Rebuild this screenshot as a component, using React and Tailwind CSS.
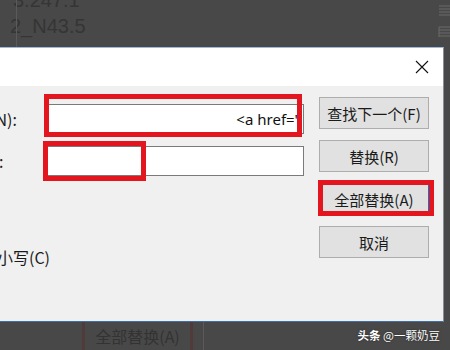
import React from "react";

function Btn({ children, focused }) {
  return (
    <div
      className={
        "h-[32px] w-[110px] flex items-center justify-center bg-[#e1e1e1] border text-[15px] text-[#1a1a1a] leading-none " +
        (focused ? "border-[#0078d7]" : "border-[#adadad]")
      }
    >
      {children}
    </div>
  );
}

export default function App() {
  return (
    <div className="w-[450px] h-[350px] overflow-hidden bg-[#484848] flex flex-col font-['Noto_Sans_CJK_SC','Noto_Sans',sans-serif]">
      {/* background editor strip */}
      <div className="h-[47px] flex shrink-0 overflow-hidden relative">
        <div className="ml-[10px] mt-[-13px] flex flex-col font-['Liberation_Sans',sans-serif] text-[20px] leading-[26px] text-[#353535]">
          <span className="ml-[3px]">3.247.1</span>
          <span>2_N43.5</span>
        </div>
        <div className="absolute left-[16px] top-0 w-px h-[47px] bg-[#5a5a5a]" />
        <div className="ml-auto mr-0 mt-[5px] flex flex-col gap-[10px]">
          <svg width="12" height="11" viewBox="0 0 12 11">
            <path d="M1 1H12M1 4H12M1 7H12M1 10H12" stroke="#6a6a6a" strokeWidth="1" />
          </svg>
          <svg width="12" height="12" viewBox="0 0 12 12">
            <path d="M1 1H12M1 4H12M1 7H12M1 10H12" stroke="#6a6a6a" strokeWidth="1" />
            <path d="M1 1V11" stroke="#6a6a6a" strokeWidth="1" />
          </svg>
        </div>
      </div>

      {/* dialog */}
      <div className="w-[444px] shrink-0 flex flex-col border-t border-t-[#9cb8dc] border-b border-b-[#3c6ea8] border-r border-r-[#8a8f96]">
        <div className="h-[38px] bg-white flex items-center justify-end pr-[14px]">
          <svg width="14" height="14" viewBox="0 0 14 14">
            <path d="M1 1L13 13M13 1L1 13" stroke="#111" strokeWidth="1.1" />
          </svg>
        </div>
        <div className="h-[235px] bg-[#f0f0f0] relative flex">
          {/* left column */}
          <div className="-ml-[74px] flex flex-col pt-[18px]">
            <div className="flex items-center h-[30px]">
              <span className="w-[121px] text-[16px] text-[#1a1a1a] whitespace-nowrap leading-none">查找内容(N):</span>
              <div className="w-[257px] h-[30px] bg-white border border-[#7a7a7a] flex items-center justify-end pr-[5px] overflow-hidden">
                <span className="font-['Noto_Sans',sans-serif] text-[15px] text-[#111] whitespace-nowrap leading-none">&lt;a href='</span>
              </div>
            </div>
            <div className="flex items-center h-[30px] mt-[12px]">
              <span className="w-[121px] pl-[4px] text-[16px] text-[#1a1a1a] whitespace-nowrap leading-none">替换为(P):</span>
              <div className="w-[257px] h-[30px] bg-white border border-[#7a7a7a]" />
            </div>
            <div className="flex items-center h-[20px] mt-[71px] pl-[5px] gap-[5px]">
              <div className="w-[13px] h-[13px] border border-[#333] bg-white" />
              <span className="text-[16px] text-[#1a1a1a] whitespace-nowrap leading-none">区分大小写(C)</span>
            </div>
          </div>

          {/* buttons */}
          <div className="ml-[15px] pt-[11px] flex flex-col gap-[11px]">
            <Btn>查找下一个(F)</Btn>
            <Btn>替换(R)</Btn>
            <Btn focused>全部替换(A)</Btn>
            <Btn>取消</Btn>
          </div>

          {/* red annotation boxes */}
          <div className="absolute left-[44px] top-[8px] w-[258px] h-[43px] border-[5px] border-[#e3151f]" />
          <div className="absolute left-[43px] top-[55px] w-[103px] h-[40px] border-[5px] border-[#e3151f]" />
          <div className="absolute left-[318px] top-[94px] w-[116px] h-[36px] border-[5px] border-[#e3151f]" />
        </div>
      </div>

      {/* background bottom strip */}
      <div className="flex-1 flex items-start overflow-hidden">
        <div className="ml-[82px] w-[111px] h-[40px] border-[3px] border-[#513a3a] border-t-0 flex items-start justify-center pt-[5px]">
          <span className="text-[16px] text-[#333333] leading-[18px]">全部替换(A)</span>
        </div>
        <div className="ml-[10px] w-px h-full bg-[#5a5a5a]" />
        <div className="ml-auto mr-[10px] mt-[6px] text-[11.5px] leading-[14px] text-white whitespace-nowrap [text-shadow:0_0_2px_rgba(0,0,0,0.6)]">
          <span className="font-bold">头条</span> @一颗奶豆
        </div>
      </div>
    </div>
  );
}
